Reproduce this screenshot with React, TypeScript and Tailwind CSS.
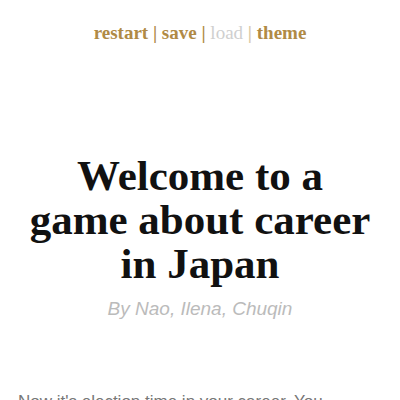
import React from "react";

export default function App() {
  return (
    <div className="w-[400px] h-[400px] overflow-hidden bg-white relative">
      <div className="h-[66px] flex justify-center pt-[22px]">
        <div className="text-[19px] leading-[22px] font-bold text-[#b08a45] font-['Liberation_Serif',serif]">
          <span>restart</span>
          <span> | </span>
          <span>save</span>
          <span> | </span>
          <span className="text-[#cfcfcf] font-normal">load</span>
          <span className="text-[#d9c9a8]"> | </span>
          <span>theme</span>
        </div>
      </div>
      <div className="pt-[88px] flex flex-col items-center">
        <h1 className="text-[43px] leading-[44px] font-bold text-[#111] text-center font-['Liberation_Serif',serif]">
          Welcome to a<br />game about career<br />in Japan
        </h1>
        <div className="mt-[12px] text-[19px] leading-[22px] italic text-[#bbbbbb] font-['Liberation_Sans',sans-serif]">
          By Nao, Ilena, Chuqin
        </div>
      </div>
      <p className="absolute left-[18px] top-[390px] w-[370px] text-[17px] leading-[24px] text-[#777] font-['Liberation_Sans',sans-serif]">
        Now it's election time in your career. You
      </p>
    </div>
  );
}
